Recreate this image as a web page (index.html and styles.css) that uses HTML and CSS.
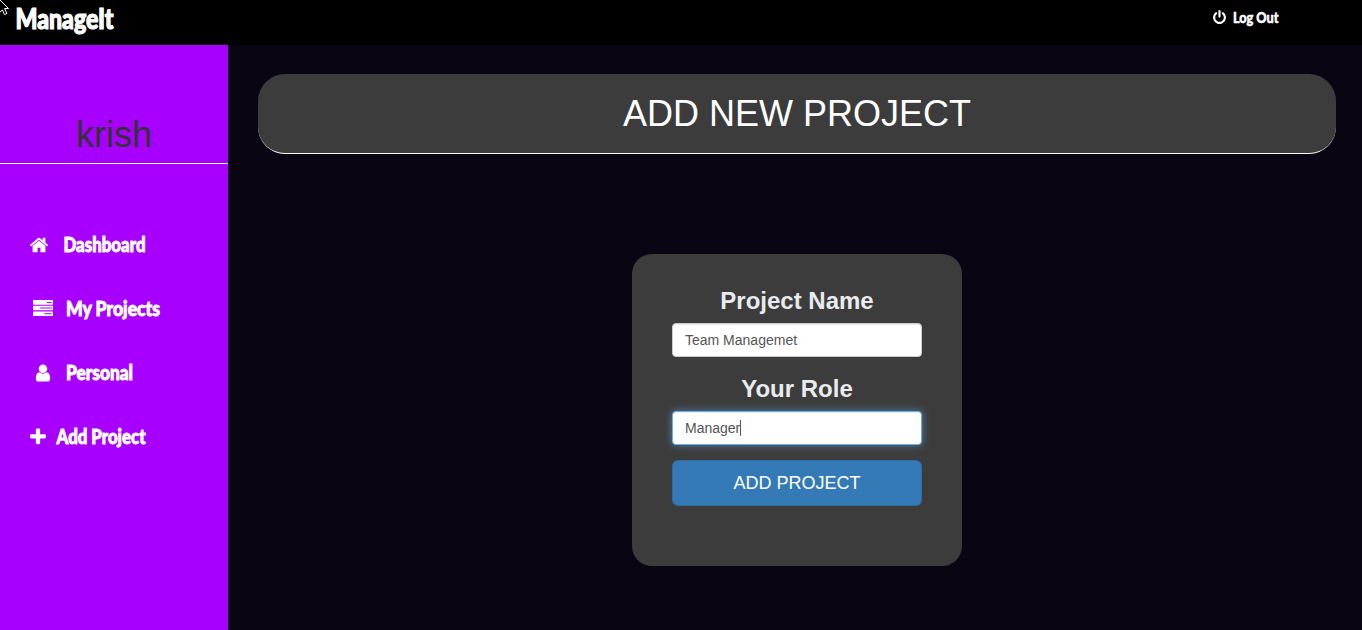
FILE: index.html
```html
<!DOCTYPE html>
<html lang="en">
<head>
<meta charset="utf-8">
<title>ManageIt</title>
<link rel="stylesheet" href="styles.css">
</head>
<body>
<header class="topbar">
  <svg class="brand" width="130" height="44"><text x="1.500" y="29" textLength="98" lengthAdjust="spacingAndGlyphs">ManageIt</text></svg>
  <a class="logout">
    <svg class="icon-power" viewBox="0 0 1792 1792"><path d="M1664 896q0 156-61 298t-164 245-245 164-298 61-298-61-245-164-164-245-61-298q0-182 80.500-343t226.500-270q43-32 95.500-25t83.500 50q32 42 24.500 94.500t-49.500 84.500q-98 74-151.500 181t-53.500 228q0 104 40.500 198.500t109.500 163.500 163.500 109.500 198.500 40.500 198.500-40.500 163.500-109.500 109.500-163.500 40.500-198.500q0-121-53.500-228t-151.500-181q-42-32-49.500-84.500t24.500-94.500q31-43 84-50t95 25q146 109 226.500 270t80.500 343zm-640-768v640q0 52-38 90t-90 38-90-38-38-90v-640q0-52 38-90t90-38 90 38 38 90z"/></svg>
    <svg class="logout-label" width="70" height="44"><text x="1" y="23" textLength="45.500" lengthAdjust="spacingAndGlyphs">Log Out</text></svg>
  </a>
</header>
<svg class="pointer" viewBox="0 0 10 16"><path d="M-3 -3L8.500 8.500H4.500L7 13.500L4.500 14.500L2.500 10L0 12"/></svg>
<div class="shell">
  <aside class="sidebar">
    <h1 class="user">krish</h1>
    <nav class="menu">
      <a class="item">
        <svg class="icon" viewBox="0 0 1792 1792"><path d="M1472 992v480q0 26-19 45t-45 19h-384v-384h-256v384h-384q-26 0-45-19t-19-45v-480q0-1 .5-3t.5-3l575-474 575 474q1 2 1 6zm223-69l-62 74q-8 9-21 11h-3q-13 0-21-7l-692-577-692 577q-12 8-24 7-13-2-21-11l-62-74q-8-10-7-23.500t11-21.500l719-599q32-26 76-26t76 26l244 204v-195q0-14 9-23t23-9h192q14 0 23 9t9 23v408l219 182q10 8 11 21.500t-7 23.500z"/></svg>
        <svg class="label label-home" width="120" height="32"><text x="1.500" y="24" textLength="82" lengthAdjust="spacingAndGlyphs">Dashboard</text></svg>
      </a>
      <a class="item item-wide">
        <svg class="icon icon-tasks" viewBox="0 0 20 16"><path fill-rule="evenodd" d="M.7 0h18.600q.7 0 .7.700v3.300q0 .7-.7.700H.7q-.7 0-.7-.7V.7Q0 0 .7 0zM14 2v1h4.700V2zM.7 5.700h18.600q.7 0 .7.700v3.200q0 .7-.7.700H.7q-.7 0-.7-.7V6.400q0-.7.7-.7zM7.200 7.500v1.100h11.500V7.500zM.7 11.400h18.600q.7 0 .7.700v3.200q0 .7-.7.700H.7Q0 16 0 15.300v-3.200q0-.7.7-.7zM11.400 13.200v1.100h7.300v-1.100z"/></svg>
        <svg class="label label-tasks" width="130" height="32"><text x="1" y="24" textLength="94" lengthAdjust="spacingAndGlyphs">My Projects</text></svg>
      </a>
      <a class="item item-wide">
        <svg class="icon" viewBox="0 0 1792 1792"><path d="M1536 1399q0 109-62.500 187t-150.500 78h-854q-88 0-150.500-78t-62.500-187q0-85 8.500-160.500t31.500-152 58.500-131 94-89 134.500-34.500q131 128 313 128t313-128q76 0 134.500 34.500t94 89 58.500 131 31.500 152 8.500 160.500zm-256-887q0 159-112.500 271.500t-271.500 112.500-271.500-112.500-112.500-271.500 112.500-271.500 271.500-112.500 271.500 112.500 112.500 271.500z"/></svg>
        <svg class="label label-user" width="110" height="32"><text x="1" y="24" textLength="67" lengthAdjust="spacingAndGlyphs">Personal</text></svg>
      </a>
      <a class="item item-add">
        <svg class="icon" viewBox="0 0 1792 1792"><path d="M1600 736v192q0 40-28 68t-68 28h-416v416q0 40-28 68t-68 28h-192q-40 0-68-28t-28-68v-416h-416q-40 0-68-28t-28-68v-192q0-40 28-68t68-28h416v-416q0-40 28-68t68-28h192q40 0 68 28t28 68v416h416q40 0 68 28t28 68z"/></svg>
        <svg class="label label-add" width="120" height="32"><text x="1.500" y="24" textLength="89" lengthAdjust="spacingAndGlyphs">Add Project</text></svg>
      </a>
    </nav>
  </aside>
  <main class="content">
    <h1 class="title">ADD NEW PROJECT</h1>
    <form class="card">
      <label class="field-label" for="name">Project Name</label>
      <input class="field" id="name" type="text" value="Team Managemet">
      <label class="field-label">Your Role</label>
      <div class="field field-active">Manager<span class="caret"></span></div>
      <button class="submit" type="button">ADD PROJECT</button>
    </form>
  </main>
</div>
</body>
</html>
```

FILE: styles.css
```css
* { box-sizing: border-box; }
body {
  margin: 0;
  height: 630px;
  overflow: hidden;
  background: #090512;
  color: #fff;
  font: 14px/20px "Liberation Sans", Arial, sans-serif;
}
svg { display: block; flex: none; fill: #fff; overflow: visible; }
svg text {
  font-family: Lato, "Open Sans", sans-serif;
  font-weight: 900;
  stroke: #fff;
  stroke-width: .9px;
}
.topbar {
  display: flex;
  justify-content: space-between;
  height: 45px;
  padding: 0 60px 0 14px;
  background: #000;
}
.brand text { font-size: 28px; stroke-width: 1.2px; }
.logout { display: flex; }
.icon-power { width: 15px; height: 15px; margin: 10px 5px 0 0; }
.logout-label text { font-size: 15px; stroke-width: .5px; }
.pointer {
  position: absolute;
  left: 0;
  top: 0;
  width: 10px;
  height: 16px;
}
.pointer path { fill: #000; stroke: #fff; stroke-width: 1; }
.shell { display: flex; height: 585px; }
.sidebar { width: 228px; background: #a800ff; }
.user {
  height: 119px;
  margin: 0;
  padding-top: 70px;
  border-bottom: 1px solid #fff;
  color: #333;
  font-size: 36px;
  font-weight: 400;
  line-height: 40px;
  text-align: center;
}
.menu {
  display: flex;
  flex-direction: column;
  gap: 32px;
  padding: 64px 0 0 29px;
}
.item { display: flex; align-items: center; height: 32px; }
.icon { width: 20px; height: 20px; margin-top: 2px; }
.item-wide { padding-left: 4px; }
.icon-tasks { height: 16px; margin-top: 0; }
.label text { font-size: 20.500px; }
.label-home { margin-left: 13px; }
.label-tasks, .label-user { margin-left: 12px; }
.label-add { margin-left: 7px; }
.item-add { margin-left: -1px; }
.content {
  flex: 1;
  display: flex;
  flex-direction: column;
  align-items: center;
  padding: 29px 26px 0 30px;
}
.title {
  width: 100%;
  height: 80px;
  margin: 0 0 100px;
  padding-top: 20px;
  border-bottom: 1px solid #fff;
  border-radius: 27px;
  background: #3c3c3c;
  font-size: 36px;
  font-weight: 400;
  line-height: 40px;
  text-align: center;
}
.card {
  display: flex;
  flex-direction: column;
  width: 330px;
  height: 312px;
  padding: 30px 40px;
  border-radius: 20px;
  background: #3c3c3c;
}
.field-label {
  height: 34px;
  margin-bottom: 5px;
  color: #e9ecef;
  font-size: 24px;
  font-weight: 700;
  line-height: 34px;
  text-align: center;
}
.field {
  display: flex;
  align-items: center;
  height: 34px;
  margin-bottom: 15px;
  padding: 6px 12px;
  border: 1px solid #ccc;
  border-radius: 4px;
  background: #fff;
  box-shadow: inset 0 1px 1px rgba(0, 0, 0, .075);
  color: #555;
  font: 14px/20px "Liberation Sans", Arial, sans-serif;
}
.field-active {
  border-color: #66afe9;
  box-shadow: inset 0 1px 1px rgba(0, 0, 0, .075), 0 0 8px rgba(102, 175, 233, .6);
}
.caret { width: 1px; height: 16px; background: #555; }
.submit {
  height: 46px;
  padding: 0;
  border: 1px solid #2e6da4;
  border-radius: 6px;
  background: #337ab7;
  color: #fff;
  font: 18px/24px "Liberation Sans", Arial, sans-serif;
}
```
